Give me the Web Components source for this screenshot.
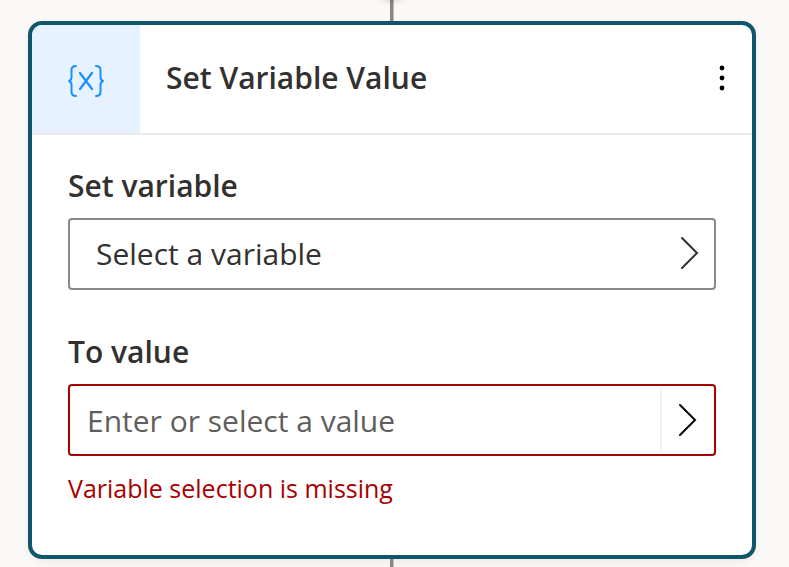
<!DOCTYPE html>
<html lang="en">
<head>
<meta charset="utf-8">
<meta name="viewport" content="width=device-width, initial-scale=1">
<title>Set Variable Value</title>
<style>
html, body { height: 100%; }
body { margin: 0; background: #faf9f8; color: #323130; font-family: "Segoe UI", "Open Sans", "Noto Sans", sans-serif; }
</style>
</head>
<body>
<flow-canvas>
  <action-card heading="Set Variable Value">
    <variable-picker label="Set variable" text="Select a variable"></variable-picker>
    <value-field label="To value" placeholder="Enter or select a value" error="Variable selection is missing"></value-field>
  </action-card>
</flow-canvas>
<script>
const chevron = `<svg width="20" height="34" viewBox="0 0 20 34" fill="none" stroke="currentColor" stroke-width="2" stroke-linecap="round" aria-hidden="true"><path d="M2 2 17 17 2 32"/></svg>`;

const fieldStyles = `
  *, ::before { box-sizing: border-box; }
  :host { display: block; }
  .label { display: block; margin-bottom: 12px; font-size: 30px; line-height: 40px; font-weight: 600; }
  svg { display: block; flex: none; }
  button { font: inherit; color: inherit; background: none; cursor: pointer; }
`;

class FlowCanvas extends HTMLElement {
  constructor() {
    super();
    this.attachShadow({ mode: "open" }).innerHTML = `
      <style>
        :host { display: flex; flex-direction: column; min-height: 100vh; box-sizing: border-box; padding: 0 33px 0 28px; overflow: hidden; }
        .line { width: 4px; box-sizing: border-box; align-self: center; background: #8a8886; border-right: 1px solid #c0bfbe; }
        .top { height: 21px; position: relative; }
        .top::before { content: ""; position: absolute; left: -18px; top: -42px; width: 40px; height: 40px; border-radius: 50%; box-shadow: 0 2px 8px rgba(0,0,0,.2); }
        .bottom { flex: 1; }
      </style>
      <div class="line top"></div>
      <slot></slot>
      <div class="line bottom"></div>`;
  }
}

class VariableIcon extends HTMLElement {
  constructor() {
    super();
    this.attachShadow({ mode: "open" }).innerHTML = `
      <style>
        :host { display: flex; align-items: center; justify-content: center; box-sizing: border-box; width: 108px; min-height: 108px; padding-top: 4px; background: #e6f2ff; color: #1890ff; }
        svg { display: block; }
      </style>
      <svg width="38" height="34" viewBox="0 0 38 34" fill="none" stroke="currentColor" stroke-width="2" stroke-linecap="round" stroke-linejoin="round" aria-hidden="true">
        <path d="M9 2Q4.500 2 4.500 6V13Q4.500 16 2 17Q4.500 18 4.500 21V28Q4.500 32 9 32"/>
        <path d="M29 2Q33.500 2 33.500 6V13Q33.500 16 36 17Q33.500 18 33.500 21V28Q33.500 32 29 32"/>
        <path d="M13 9 25 25M25 9 13 25" stroke-width="2.200"/>
      </svg>`;
  }
}

class ActionCard extends HTMLElement {
  constructor() {
    super();
    this.attachShadow({ mode: "open" }).innerHTML = `
      <style>
        :host { display: block; background: #fff; border: 4px solid #0f566b; border-radius: 14px; box-shadow: 0 3px 8px rgba(0,0,0,.06); }
        header { display: flex; align-items: stretch; border-bottom: 2px solid #eaeaea; }
        variable-icon { flex: none; border-top-left-radius: 10px; }
        h1 { flex: 1; min-width: 0; margin: 0; padding: 33px 0 35px 26px; font-size: 30px; line-height: 40px; font-weight: 600; }
        button { align-self: center; display: flex; justify-content: center; width: 40px; padding: 5px 0 7px; margin-right: 10px; border: 0; background: none; color: #000; cursor: pointer; }
        svg { display: block; }
        .body { display: flex; flex-direction: column; gap: 42px; padding: 31px 36px 51px; }
      </style>
      <header>
        <variable-icon></variable-icon>
        <h1></h1>
        <button type="button" aria-label="More options"><svg width="6" height="26" viewBox="0 0 6 26" fill="currentColor" aria-hidden="true"><circle cx="3" cy="3" r="2.400"/><circle cx="3" cy="13" r="2.400"/><circle cx="3" cy="23" r="2.400"/></svg></button>
      </header>
      <div class="body"><slot></slot></div>`;
    this.shadowRoot.querySelector("h1").textContent = this.getAttribute("heading");
  }
}

class VariablePicker extends HTMLElement {
  constructor() {
    super();
    this.attachShadow({ mode: "open" }).innerHTML = `
      <style>${fieldStyles}
        button { display: flex; align-items: center; justify-content: space-between; width: 100%; min-height: 72px; padding: 0 14px 0 26px; border: 2px solid #8a8886; border-radius: 4px; text-align: left; font-size: 30px; line-height: 40px; }
        svg { margin-bottom: 2px; }
      </style>
      <label class="label" for="picker"></label>
      <button id="picker" type="button"><span></span>${chevron}</button>`;
    this.shadowRoot.querySelector("label").textContent = this.getAttribute("label");
    this.shadowRoot.querySelector("span").textContent = this.getAttribute("text");
  }
}

class ValueField extends HTMLElement {
  constructor() {
    super();
    this.attachShadow({ mode: "open" }).innerHTML = `
      <style>${fieldStyles}
        .box { display: flex; align-items: stretch; min-height: 72px; border: 2px solid #a80000; border-radius: 4px; }
        input { flex: 1; min-width: 0; border: 0; outline: 0; background: none; padding: 2px 0 0 17px; font: inherit; font-size: 30px; line-height: 40px; color: inherit; }
        input::placeholder { color: #605e5c; opacity: 1; }
        button { display: flex; align-items: center; justify-content: center; width: 54px; margin: 3px 0; padding: 0; border: 0; border-left: 2px solid #f3f2f1; color: #000; }
        p { margin: 16px 0 0; font-size: 25px; line-height: 32px; color: #a80000; }
      </style>
      <label class="label" for="value"></label>
      <div class="box">
        <input id="value" type="text" aria-invalid="true" aria-describedby="error">
        <button type="button" aria-label="Select a value">${chevron}</button>
      </div>
      <p id="error"></p>`;
    this.shadowRoot.querySelector("label").textContent = this.getAttribute("label");
    this.shadowRoot.querySelector("input").placeholder = this.getAttribute("placeholder");
    this.shadowRoot.querySelector("p").textContent = this.getAttribute("error");
  }
}

customElements.define("variable-icon", VariableIcon);
customElements.define("variable-picker", VariablePicker);
customElements.define("value-field", ValueField);
customElements.define("action-card", ActionCard);
customElements.define("flow-canvas", FlowCanvas);
</script>
</body>
</html>
